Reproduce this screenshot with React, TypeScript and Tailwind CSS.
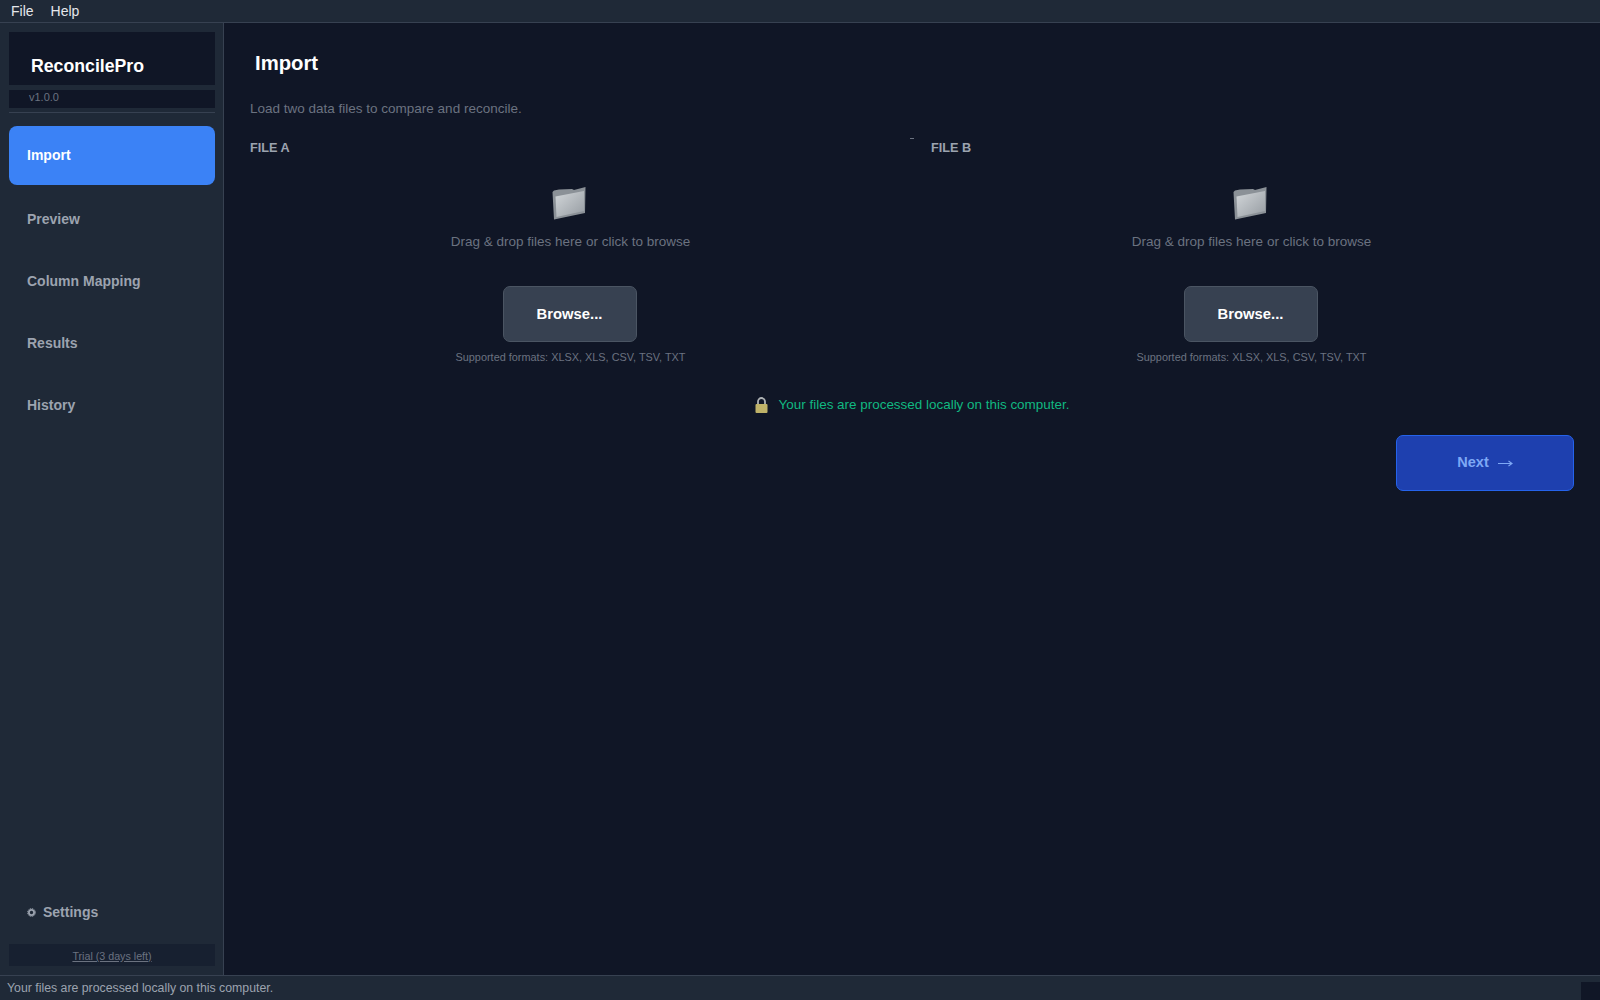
import React from "react";

const nav = ["Preview", "Column Mapping", "Results", "History"];

function Folder() {
  return (
    <svg width="34" height="34" viewBox="0 0 34 34" className="block mr-[3px]">
      <defs>
        <linearGradient id="fold" x1="0" y1="0" x2="1" y2="1">
          <stop offset="0" stopColor="#d3d7da" />
          <stop offset="1" stopColor="#969ca2" />
        </linearGradient>
      </defs>
      <path d="M0.5 6 L2 33.5 L33 27 L33.5 1 L22 4 L20 3 L7 3.5 L2 4.5 Z" fill="#8b9197" />
      <path d="M3.5 10.5 L32 5 L32 25 L4.5 31 Z" fill="url(#fold)" />
    </svg>
  );
}

function Lock() {
  return (
    <svg width="13" height="16" viewBox="0 0 13 16" className="block">
      <path d="M3 8 V4.5 a3.5 3.5 0 0 1 7 0 V8" fill="none" stroke="#aeb2b4" strokeWidth="1.8" />
      <rect x="0.5" y="7" width="12" height="9" rx="1" fill="#bfb268" />
    </svg>
  );
}

function Drop({ label }: { label: string }) {
  return (
    <div className="flex-1 min-w-0">
      <div className="text-[12.7px] leading-[16px] font-bold text-[#9ca3af]">{label}</div>
      <div className="flex flex-col items-center pt-[30px]">
        <Folder />
        <div className="mt-[13px] text-[13.5px] leading-[18px] text-[#6b7280]">Drag &amp; drop files here or click to browse</div>
        <button className="mt-[35px] mr-[2px] w-[134px] h-[56px] rounded-[7px] bg-[#374151] border border-[#4b5563] text-white text-[14.8px] font-bold">Browse...</button>
        <div className="mt-[8px] text-[10.9px] leading-[14px] text-[#6b7280]">Supported formats: XLSX, XLS, CSV, TSV, TXT</div>
      </div>
    </div>
  );
}

export default function App() {
  return (
    <div className="h-screen w-[1600px] flex flex-col overflow-hidden bg-[#101626] font-['Liberation_Sans',Arial,sans-serif]">
      <div className="h-[23px] shrink-0 flex items-center gap-[17px] pl-[11px] bg-[#1f2937] border-b border-[#374151] text-[14px] text-[#e5e7eb]">
        <span>File</span>
        <span>Help</span>
      </div>
      <div className="flex-1 flex min-h-0">
        <aside className="w-[224px] shrink-0 flex flex-col bg-[#1f2937] border-r border-[#374151] pt-[9px] pb-[9px] pl-[9px] pr-[8px]">
          <div className="h-[53px] bg-[#101626] pl-[22px] pt-[23px] text-[17.7px] leading-[22px] font-bold text-white">ReconcilePro</div>
          <div className="mt-[5px] h-[18px] bg-[#101626] pl-[20px] text-[11px] leading-[15px] text-[#6b7280]">v1.0.0</div>
          <div className="mt-[4px] h-px bg-[#374151]"></div>
          <div className="mt-[13px] h-[59px] rounded-[8px] bg-[#3b82f6] pl-[18px] flex items-center text-[14px] font-bold text-white">Import</div>
          <div className="h-[1px]"></div>
          {nav.map((n) => (
            <div key={n} className="mt-[4px] h-[58px] pl-[18px] flex items-center text-[14px] font-bold text-[#9ca3af]">{n}</div>
          ))}
          <div className="mt-auto flex items-center pl-[18px] text-[14px] font-bold text-[#9ca3af]">
            <svg width="9" height="9" viewBox="0 0 9 9" className="mr-[7px]">
              <circle cx="4.5" cy="4.5" r="2.6" fill="none" stroke="#9ca3af" strokeWidth="1.8" />
              <circle cx="4.5" cy="4.5" r="3.9" fill="none" stroke="#9ca3af" strokeWidth="1" strokeDasharray="1.2 0.85" />
            </svg>
            Settings
          </div>
          <div className="mt-[21px] h-[22px] bg-[#172030] flex items-center justify-center text-[10.7px] pt-[2px] text-[#6b7280] underline">Trial (3 days left)</div>
        </aside>
        <main className="flex-1 min-w-0 pl-[26px] pr-[26px] pt-[26px]">
          <h1 className="pl-[5px] text-[20.3px] leading-[28px] font-bold text-white">Import</h1>
          <p className="mt-[23px] text-[13.5px] leading-[18px] text-[#6b7280]">Load two data files to compare and reconcile.</p>
          <div className="relative mt-[22px] mr-[2px] flex gap-[40px]">
            <div className="absolute left-[660px] top-[-2px] w-[4px] h-px bg-[#6b7280]"></div>
            <Drop label="FILE A" />
            <Drop label="FILE B" />
          </div>
          <div className="mt-[31px] flex items-center justify-center gap-[11px]">
            <Lock />
            <span className="text-[13.45px] text-[#10b981]">Your files are processed locally on this computer.</span>
          </div>
          <div className="mt-[20px] flex justify-end">
            <button className="w-[178px] h-[56px] rounded-[7px] bg-[#1e40af] border border-[#2563eb] text-[#7ea8f5] text-[14.5px] font-bold flex items-center justify-center gap-[9px]">
              <span>Next</span>
              <svg width="15" height="9" viewBox="0 0 15 9" className="block">
                <path d="M0 4.5 H14 M10.5 2 L14 4.5 L10.5 7" fill="none" stroke="#7ea8f5" strokeWidth="1.1" />
              </svg>
            </button>
          </div>
        </main>
      </div>
      <div className="h-[25px] shrink-0 flex bg-[#1f2937] border-t border-[#374151] pl-[7px] text-[12.3px] leading-[25px] text-[#9ca3af]">
        <span className="flex-1">Your files are processed locally on this computer.</span>
        <div className="w-[19px] h-[18px] self-end bg-[#101626]"></div>
      </div>
    </div>
  );
}
